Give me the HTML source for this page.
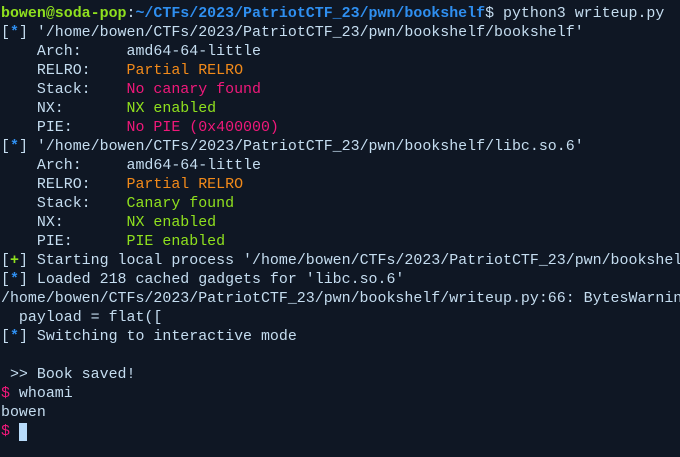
<!DOCTYPE html>
<html><head><meta charset="utf-8"><style>
html,body{margin:0;padding:0;background:#0f1724;width:680px;height:457px;overflow:hidden}
pre{margin:0;padding:5px 0 0 1px;width:679px;height:452px;overflow:hidden;font-family:"Liberation Mono","DejaVu Sans Mono",monospace;font-size:14.95px;line-height:19px;color:#c5ddf0;white-space:pre}
.g{color:#8fe01e;font-weight:bold}
.b{color:#2f8ff0;font-weight:bold}
.bl{color:#2f8ff0;font-weight:bold}
.gr{color:#8fe01e}
.o{color:#f28a1a}
.p{color:#f0187a}
.cur{display:inline-block;width:8px;height:18px;background:#b8dcfb;vertical-align:top}
</style></head><body><pre><span class="g">bowen@soda-pop</span>:<span class="b">~/CTFs/2023/PatriotCTF_23/pwn/bookshelf</span>$ python3 writeup.py
[<span class="bl">*</span>] '/home/bowen/CTFs/2023/PatriotCTF_23/pwn/bookshelf/bookshelf'
    Arch:     amd64-64-little
    RELRO:    <span class="o">Partial RELRO</span>
    Stack:    <span class="p">No canary found</span>
    NX:       <span class="gr">NX enabled</span>
    PIE:      <span class="p">No PIE (0x400000)</span>
[<span class="bl">*</span>] '/home/bowen/CTFs/2023/PatriotCTF_23/pwn/bookshelf/libc.so.6'
    Arch:     amd64-64-little
    RELRO:    <span class="o">Partial RELRO</span>
    Stack:    <span class="gr">Canary found</span>
    NX:       <span class="gr">NX enabled</span>
    PIE:      <span class="gr">PIE enabled</span>
[<span class="gr" style="font-weight:bold">+</span>] Starting local process '/home/bowen/CTFs/2023/PatriotCTF_23/pwn/bookshelf/bookshelf'
[<span class="bl">*</span>] Loaded 218 cached gadgets for 'libc.so.6'
/home/bowen/CTFs/2023/PatriotCTF_23/pwn/bookshelf/writeup.py:66: BytesWarning
  payload = flat([
[<span class="bl">*</span>] Switching to interactive mode

 &gt;&gt; Book saved!
<span class="p">$</span> whoami
bowen
<span class="p">$</span> <span class="cur"></span></pre></body></html>
